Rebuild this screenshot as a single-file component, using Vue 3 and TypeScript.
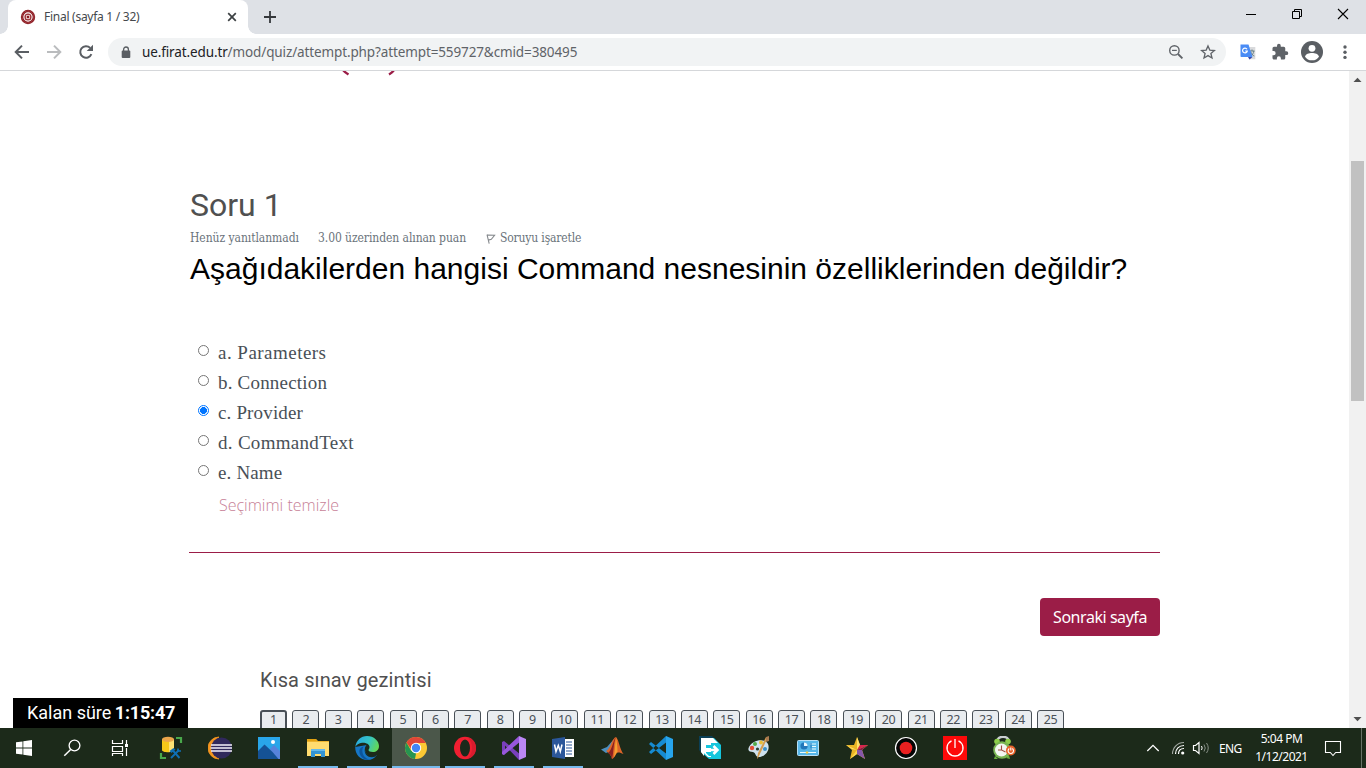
<script setup lang="ts">
import { ref } from 'vue'

interface Option { key: string; label: string }

const options: Option[] = [
  { key: 'a', label: 'Parameters' },
  { key: 'b', label: 'Connection' },
  { key: 'c', label: 'Provider' },
  { key: 'd', label: 'CommandText' },
  { key: 'e', label: 'Name' },
]
const selected = ref<string>('c')
const pages: number[] = Array.from({ length: 25 }, (_, i) => i + 1)
</script>

<template>
  <div class="screen">
    <header class="tabs">
      <div class="tab">
        <svg class="favicon" width="16" height="16" viewBox="0 0 16 16">
          <circle cx="8" cy="8" r="7.2" fill="#8e1b22" />
          <circle cx="8" cy="8" r="5.9" fill="none" stroke="#b86b6e" stroke-width=".6" stroke-dasharray="1 .6" />
          <circle cx="8" cy="8" r="4.1" fill="#8e1b22" stroke="#fff" stroke-width="1.1" />
          <path d="M6.300 6.300h3.400v3.400H6.300z" fill="none" stroke="#f3dcdc" stroke-width="1" />
        </svg>
        <span class="tab-title">Final (sayfa 1 / 32)</span>
        <svg class="tab-close" width="10" height="10" viewBox="0 0 10 10"><path d="M1.2 1.2l7.6 7.6M8.8 1.2L1.2 8.8" stroke="#3c4043" stroke-width="1.7" /></svg>
      </div>
      <svg class="plus" width="12" height="12" viewBox="0 0 12 12"><path d="M6 0v12M0 6h12" stroke="#35383b" stroke-width="1.8" /></svg>
      <div class="win-controls">
        <svg width="12" height="12" viewBox="0 0 12 12"><path d="M1 6.5h10" stroke="#000" /></svg>
        <svg width="12" height="12" viewBox="0 0 12 12"><path d="M1.5 3.5h7v7h-7zM3.5 3.5v-2h7v7h-2" fill="none" stroke="#000" /></svg>
        <svg width="12" height="12" viewBox="0 0 12 12"><path d="M1 1l10 10M11 1L1 11" stroke="#000" stroke-width="1.1" /></svg>
      </div>
    </header>

    <div class="toolbar">
      <div class="nav-icons">
        <svg width="16" height="16" viewBox="0 0 16 16"><path d="M15 8H2M8 1.6L1.7 8 8 14.4" fill="none" stroke="#5a5e63" stroke-width="2" /></svg>
        <svg width="16" height="16" viewBox="0 0 16 16"><path d="M1 8h13M8 1.6L14.3 8 8 14.4" fill="none" stroke="#babcbe" stroke-width="2" /></svg>
        <svg width="16" height="16" viewBox="0 0 16 16"><path d="M13.4 10.2A5.8 5.8 0 1 1 12.2 3.9" fill="none" stroke="#5a5e63" stroke-width="2" /><path d="M15 .8v6.3H8.7z" fill="#5a5e63" /></svg>
      </div>
      <div class="address">
        <svg class="lock" width="10" height="13" viewBox="0 0 10 13"><path d="M2.6 5V3.4a2.4 2.4 0 0 1 4.8 0V5" fill="none" stroke="#5a5e63" stroke-width="1.3" /><rect x=".7" y="4.6" width="8.6" height="7.4" rx="1" fill="#5a5e63" /></svg>
        <span class="url"><b>ue.firat.edu.tr</b>/mod/quiz/attempt.php?attempt=559727&amp;cmid=380495</span>
        <svg class="zoom" width="16" height="16" viewBox="0 0 16 16"><circle cx="6.4" cy="6.4" r="4.7" fill="none" stroke="#5f6368" stroke-width="1.4" /><path d="M10 10l4.4 4.4" stroke="#5f6368" stroke-width="1.9" /><path d="M4 6.4h4.8" stroke="#5f6368" stroke-width="1.2" /></svg>
        <svg class="star" width="16" height="16" viewBox="0 0 16 16"><path d="M8 1.9l1.8 4.2 4.6.4-3.5 3 1.1 4.5L8 11.600l-4 2.400 1.100-4.500-3.500-3 4.600-.4z" fill="none" stroke="#5f6368" stroke-width="1.3" /></svg>
      </div>
      <div class="extensions">
        <svg width="16" height="16" viewBox="0 0 16 16"><path d="M7 3h8.300v12.300H9z" fill="#d9dadc" /><path d="M10 7h4.500M12 5.500V7M10.500 12c2-1 3-3 3.300-5M10.800 8c.5 2 2 3.500 3.500 4" stroke="#657e84" stroke-width="1" fill="none" /><path d="M.5.500h8l4 12.500H1.300a.8.800 0 0 1-.8-.8z" fill="#4a8cf5" /><path d="M8 13h4.500L9.500 15.500z" fill="#3949ab" /><path d="M7 5.200A2.400 2.400 0 1 0 7.300 7H5.200" fill="none" stroke="#fff" stroke-width="1.200" /></svg>
        <svg width="18" height="18" viewBox="0 0 24 24"><path fill="#5f6368" d="M20.500 11H19V7a2 2 0 0 0-2-2h-4V3.500a2.500 2.500 0 0 0-5 0V5H4a2 2 0 0 0-2 2v3.800h1.500a2.700 2.700 0 0 1 0 5.400H2V20c0 1.100.9 2 2 2h3.800v-1.500a2.700 2.700 0 0 1 5.400 0V22H17a2 2 0 0 0 2-2v-4h1.500a2.500 2.500 0 0 0 0-5z" /></svg>
        <svg width="22" height="22" viewBox="0 0 22 22"><circle cx="11" cy="11" r="11" fill="#5a5e63" /><circle cx="11" cy="7.300" r="3.400" fill="#fff" /><path d="M4 15.700C4.600 13 8 12 11 12s6.400 1 7 3.700A8.200 8.200 0 0 1 11 19.300a8.200 8.200 0 0 1-7-3.600z" fill="#fff" /></svg>
        <svg width="4" height="16" viewBox="0 0 4 16"><g fill="#5a5e63"><circle cx="2" cy="3" r="1.700" /><circle cx="2" cy="8.200" r="1.700" /><circle cx="2" cy="13.400" r="1.700" /></g></svg>
      </div>
    </div>

    <main class="viewport">
      <section class="page">
        <svg class="logo-edge" width="60" height="5" viewBox="0 0 60 5"><path d="M1 -1q2 2.500 5.500 4.500M52 -1q-1.500 2.500-5 4.500" fill="none" stroke="#9b1d47" stroke-width="2.400" /></svg>
        <h3 class="question-no">Soru 1</h3>
        <div class="info">
          <span class="state">Henüz yanıtlanmadı</span>
          <span class="grade">3.00 üzerinden alınan puan</span>
          <span class="flag">
            <svg width="10" height="12" viewBox="0 0 10 12"><path d="M1 2.700l2.200 9M1 3l7.600.300-3.300 4-3 .8" fill="none" stroke="#85898d" stroke-width="1.100" /></svg>
            <span class="flag-text">Soruyu işaretle</span>
          </span>
        </div>
        <p class="question">Aşağıdakilerden hangisi Command nesnesinin özelliklerinden değildir?</p>
        <div class="answers">
          <label v-for="o in options" :key="o.key" class="answer">
            <input v-model="selected" type="radio" name="answer" :value="o.key" />
            <span :class="['answer-text', 'answer-' + o.key]">{{ o.key }}. {{ o.label }}</span>
          </label>
        </div>
        <a class="clear">Seçimimi temizle</a>
        <hr />
        <div class="actions"><button class="next"><span>Sonraki sayfa</span></button></div>
        <h5 class="nav-title">Kısa sınav gezintisi</h5>
        <nav class="pages">
          <span v-for="n in pages" :key="n" :class="['page-no', { current: n === 1 }]">{{ n }}</span>
        </nav>
      </section>
      <div class="timer"><span>Kalan süre <strong>1:15:47</strong></span></div>
      <aside class="scrollbar">
        <svg width="17" height="17" viewBox="0 0 17 17"><path d="M4.500 11l4-4.300 4 4.300z" fill="#505050" /></svg>
        <div class="thumb"></div>
        <svg class="down" width="17" height="17" viewBox="0 0 17 17"><path d="M4.500 6l4 4.300 4-4.300z" fill="#505050" /></svg>
      </aside>
    </main>

    <footer class="taskbar">
      <div class="cell"><svg viewBox="0 0 24 24"><path fill="#fff" d="M4 6.300l6.500-.9v6.100H4zM11.300 5.300L20 4v7.500h-8.700zM4 12.400h6.500v6.200L4 17.700zM11.300 12.400H20V20l-8.700-1.200z" /></svg></div>
      <div class="cell"><svg viewBox="0 0 24 24"><circle cx="14.500" cy="9.500" r="5.400" fill="none" stroke="#fff" stroke-width="1.300" /><path d="M10.700 13.500L4.300 19.700" stroke="#fff" stroke-width="1.500" /></svg></div>
      <div class="cell"><svg viewBox="0 0 24 24"><path d="M4.500 4v3.500h10V4M4.500 10.500h10v5h-10zM4.500 20v-2.500h10V20M18.500 4v4M18.500 12v8" fill="none" stroke="#fff" stroke-width="1.200" /><path d="M17 8h3v3h-3z" fill="#fff" /></svg></div>

      <div class="cell app first"><svg viewBox="0 0 24 24"><path d="M3 3v11c0 3 12 3 12 0V3z" fill="#f6c819" /><path d="M10 4v12c3 0 5-1 5-2V3z" fill="#ffe274" /><ellipse cx="9" cy="3.400" rx="6" ry="2.600" fill="#eba64b" /><path d="M17 2h5v5M2 17v5h5" fill="none" stroke="#49a84b" stroke-width="2.200" /><path d="M12 22l8-8M13.500 14l7 8" stroke="#0f6fb4" stroke-width="1.900" /><path d="M10.500 15l4-3 2 1.500-4 3.500z" fill="#0f6fb4" /><path d="M19 12.500v2.500h3" fill="none" stroke="#0f6fb4" stroke-width="1.600" /></svg></div>
      <div class="cell app"><svg viewBox="0 0 24 24"><path d="M11 1A11 11 0 0 0 11 23 13 13 0 0 1 11 1z" fill="#f4951f" stroke="#f4951f" stroke-width=".8" /><circle cx="13.500" cy="12" r="10.500" fill="#30285c" /><path d="M3 9h21M2.600 12h21.800M3 15h21" stroke="#f3f0fa" stroke-width="1.600" /></svg></div>
      <div class="cell app"><svg viewBox="0 0 24 24"><rect x="1" y="1" width="22" height="22" fill="#29a6e9" /><path d="M13 13l4-4 6 6v8h-8z" fill="#5783db" /><path d="M1 15l6.500-6.500 8 7.500 6 7H1z" fill="#155295" /><circle cx="16" cy="6" r="2" fill="#fff" /></svg></div>
      <div class="cell app running"><svg viewBox="0 0 24 24"><path d="M1 3h9l2 2h11v15H1z" fill="#edb42f" /><path d="M1 6h22v14H1z" fill="#ffdc70" /><path d="M1 3h9l1 2H1z" fill="#e2a111" /><path d="M5 13h14v8h-4v-3H9v3H5z" fill="#3294d4" /><path d="M5 13h14v2H5z" fill="#65b9eb" /></svg></div>
      <div class="cell app running"><svg viewBox="0 0 24 24">
        <defs><linearGradient id="edge-top" x1="0" y1=".2" x2="1" y2=".5"><stop offset="0" stop-color="#28a8e4" /><stop offset=".55" stop-color="#35c5c4" /><stop offset="1" stop-color="#63d957" /></linearGradient></defs>
        <path d="M.2 11C0 18 5 24 12.500 24c4 0 7-1.800 9.500-5-5 2.500-11 1.500-12-5-.4-4 2-5 2-5z" fill="#1677c6" />
        <path d="M.3 11C1 4.500 6 0 12 0c7 0 12 5 12 10 0 4-3 6-6 6-3 0-4.500-1-4.500-2s1-1 1-3c0-3-4-4.600-7.500-4.200C4 7.200 1.200 8.700.3 11z" fill="url(#edge-top)" />
        <path d="M8.500 10.500c-3 5 0 12 6.500 13.300C8 24.500 3.500 19 4.500 14c.5-2 2-3 4-3.500z" fill="#0c559c" />
        <path d="M10.500 11.500c-1.500 3 .5 7 4.500 8 3 .6 5.500-.2 7-1.300-.5 1-1 1.800-1.500 2.300-7 3-13-3-10-9z" fill="#182c25" />
      </svg></div>
      <div class="cell app chrome"><svg viewBox="0 0 24 24"><circle cx="12" cy="12" r="11" fill="#fcc934" /><path d="M2.500 6.500L7 14.500l5 3L11 23A11 11 0 0 1 2.500 6.500z" fill="#269451" /><path d="M12 7h9.800a11 11 0 0 0-19.300-.5L7 13z" fill="#df4638" /><circle cx="12" cy="12" r="5.200" fill="#fff" /><circle cx="12" cy="12" r="4.200" fill="#4285f4" /></svg></div>
      <div class="cell app running"><svg viewBox="0 0 24 24"><ellipse cx="12" cy="12" rx="11" ry="11.300" fill="#f01f31" /><path d="M15 1.500C21 3 23 8 23 12s-2 9-8 10.500c3-4 4-6 4-10.500s-1-7-4-10.500z" fill="#d81c2e" /><ellipse cx="12" cy="12" rx="5" ry="8.600" fill="#1c291b" /></svg></div>
      <div class="cell app running"><svg viewBox="0 0 24 24"><path d="M0 6l2-1 17 14-2 5L3 9.500v5L2 19l-2-1z" fill="#793fbc" /><path d="M17 0L0 16v2l2 1L19 5z" fill="#9857dc" /><path d="M17 0l7 3v18l-7 3z" fill="#bb87f5" /></svg></div>
      <div class="cell app running"><svg viewBox="0 0 24 24"><path d="M12 3h11v18H12z" fill="#fff" /><path d="M15 6h6M15 9h6M15 12h6M15 15h6M15 18h6" stroke="#2b579a" stroke-width="1.200" /><path d="M1 3l13-2v22L1 21z" fill="#2b579a" /><path d="M3.500 8.500l1.500 7L7.300 9.500l2 6 1.700-7" fill="none" stroke="#fff" stroke-width="1.500" /></svg></div>
      <div class="cell app"><svg viewBox="0 0 24 24"><path d="M1 13.500l6-2.500 7-8-3 12-5 2z" fill="#4c8fc0" /><path d="M6 15c4-1 6-13 10-14 3 3 4 13 7.500 17-3-1-4.500-2-6.500-1-2 2-2 4.500-5 6-1-4-3-6-6-8z" fill="#dd6529" /><path d="M16 1c-3 7-2 14-4 22-1-4-2-5-4-6C12 15 13 4 16 1z" fill="#8a2022" /><path d="M16 1c1 6 1.500 10 1.500 15-1.500 0-2 4-3.500 5z" fill="#f69f31" /></svg></div>
      <div class="cell app"><svg viewBox="0 0 24 24"><path d="M0 8l2-2 17 13-2 5zM0 16l2 2L19 5l-2-5z" fill="#168bd2" /><path d="M17 0l7 3v18l-7 3z" fill="#27a5ed" /></svg></div>
      <div class="cell app"><svg viewBox="0 0 24 24"><path d="M1 0h13l4 4H5v14l-4-4z" fill="#0b3f56" /><path d="M3 2h13l7 7v14H11l-8-7z" fill="#15c6dd" /><path d="M3 2h12l5 5H9c-2 0-3 1-3 3v10l-3-4z" fill="#fff" /><path d="M6 7h7v14H10l-4-4z" fill="#fff" /><path d="M8 9h5v3H8zM8 16h5v4h-2l-3-3z" fill="#15c6dd" /><path d="M6 14h12M15.500 10l4 4-4 4" fill="none" stroke="#fff" stroke-width="2.500" /></svg></div>
      <div class="cell app"><svg viewBox="0 0 24 24"><path d="M2 11C6 3 18 2 21 8c3 7-5 14-10 13-3-1-2-4-5-5-3 0-6-1-4-5z" fill="#cfe2ee" /><path d="M21 1L11 22l-1 1 1-6L19 1z" fill="#d49c4f" /><path d="M19 1l3-1v5l-3 1z" fill="#a87a4f" /><circle cx="5" cy="12" r="2.200" fill="#e54c36" /><circle cx="8" cy="8" r="2" fill="#52a948" /><circle cx="14" cy="6.500" r="2" fill="#e8bd36" /><circle cx="18" cy="13" r="2" fill="#3c8fc6" /><circle cx="10.500" cy="13" r="1.600" fill="#2a3c33" /></svg></div>
      <div class="cell app"><svg viewBox="0 0 24 24"><rect x="1.500" y="4.500" width="21" height="15" rx="1" fill="#57b7e9" stroke="#b5def5" stroke-width="1" /><circle cx="8" cy="10" r="3.600" fill="#2377ba" /><path d="M8 10V6.400A3.600 3.600 0 0 1 11.600 10z" fill="#eefaff" /><path d="M14 8h6M16 10.500h4M14 13h6M4 16.500h16" stroke="#e9fbff" stroke-width="1.200" /><path d="M15 7v7" stroke="#2377ba" stroke-width="1" /><circle cx="11" cy="16.500" r="1.200" fill="#f4cc44" /></svg></div>
      <div class="cell app"><svg viewBox="0 0 24 24"><path d="M12 1l3 8h8l-6 5 3 9-8-5-7 5 2-9-6-5h8z" fill="#eab524" /><path d="M12 1l3 8-3 5zM1 9l11 5-5-1z" fill="#ffe06c" /><path d="M15 9h8l-11 5z" fill="#d92450" /><path d="M12 14h5l3 9-8-5z" fill="#8657a9" /><path d="M17 14l6-5-11 5z" fill="#881b4c" /><path d="M12 14v4l-7 5z" fill="#ffd74a" /></svg></div>
      <div class="cell app"><svg viewBox="0 0 24 24"><circle cx="12" cy="12" r="10.500" fill="#050505" stroke="#fff" stroke-width="1.200" /><circle cx="12" cy="12" r="6.300" fill="#eb2020" /></svg></div>
      <div class="cell app"><svg viewBox="0 0 24 24"><path d="M0 0h24v24H0z" fill="#fd0909" /><path d="M8.500 4.800a8 8 0 1 0 7 0M12 3v9" fill="none" stroke="#fff" stroke-width="1.300" /></svg></div>
      <div class="cell app"><svg viewBox="0 0 24 24"><path d="M5 6c0-7 12-7 12 0" fill="none" stroke="#c9ced0" stroke-width="2.400" /><circle cx="5" cy="5.500" r="2.800" fill="#8ecf4b" /><circle cx="16" cy="5.500" r="2.800" fill="#8ecf4b" /><path d="M3 20l-1 3h4zM14 22l4 1-1-4z" fill="#6bb23d" /><circle cx="10" cy="14" r="8.800" fill="#79b552" /><circle cx="9.500" cy="14" r="6.500" fill="#f4f6f2" /><path d="M9.500 9.500v4.500l4 2M9 14H6" stroke="#a24c42" stroke-width="1.100" fill="none" /><circle cx="18.800" cy="14.500" r="4.900" fill="#e8632b" /><path d="M17.300 12.500a2.700 2.700 0 1 0 3 0M18.800 11.500v3" fill="none" stroke="#fff" stroke-width="1.100" /></svg></div>

      <div class="tray">
        <svg class="chev" width="14" height="8" viewBox="0 0 14 8"><path d="M1.300 7L7 1.400 12.700 7" fill="none" stroke="#fff" stroke-width="1.300" /></svg>
        <svg class="wifi" width="14" height="14" viewBox="0 0 14 14"><path d="M1.500 13C1.500 6.500 6.500 1.500 13 1.500" stroke="#a3a9a3" stroke-width="1.100" fill="none" /><path d="M4.500 13c0-5 3.500-8.500 8.500-8.500M7.500 13c0-3.500 2-5.500 5.500-5.500" fill="none" stroke="#fff" stroke-width="1.200" /><circle cx="11.700" cy="12" r="1.600" fill="#fff" /></svg>
        <svg class="sound" width="18" height="14" viewBox="0 0 18 14"><path d="M1.500 4.500h2L7 1.500v11l-3.500-3h-2z" fill="none" stroke="#fff" stroke-width="1.200" /><path d="M9.500 5q1.300 2 0 4" fill="none" stroke="#fff" /><path d="M12 3.500q2.500 3.500 0 7M14.500 2q3.500 5 0 10" fill="none" stroke="#879087" /></svg>
        <span class="lang">ENG</span>
        <div class="clock"><span class="time">5:04 PM</span><span class="date">1/12/2021</span></div>
        <svg class="notice" width="18" height="17" viewBox="0 0 18 17"><path d="M1.500 1.500h15v11h-4.800l-2.700 3-2.700-3H1.500z" fill="none" stroke="#fff" stroke-width="1.100" /></svg>
        <i class="peek"></i>
      </div>
    </footer>
  </div>
</template>

<style>
body { margin: 0; overflow: hidden; }
</style>

<style scoped>
* { box-sizing: border-box; }
.screen { width: 1366px; height: 768px; display: flex; flex-direction: column; overflow: hidden; background: #fff; font-family: "Noto Sans", "Open Sans", sans-serif; }
svg { display: block; flex: none; }
.screen span { white-space: nowrap; }

.tabs { height: 34px; flex: none; background: #dee1e6; display: flex; padding-left: 8px; }
.tab { position: relative; width: 240px; height: 34px; background: #fff; border-radius: 8px 8px 0 0; display: flex; align-items: center; padding-left: 12px; }
.tab::before, .tab::after { content: ""; position: absolute; bottom: 0; width: 8px; height: 8px; }
.tab::before { left: -8px; background: radial-gradient(circle at 0 0, #dee1e6 7.5px, #fff 8px); }
.tab::after { right: -8px; background: radial-gradient(circle at 100% 0, #dee1e6 7.5px, #fff 8px); }
.tab-title { margin-left: 8px; width: 183px; font-size: 12px; line-height: 16px; letter-spacing: -.27px; color: #45494d; }
.plus { margin: 11px 0 0 16px; }
.win-controls { margin-left: auto; padding: 8px 17px 0 0; display: flex; gap: 34px; }

.toolbar { height: 37px; flex: none; border-bottom: 1px solid #d5d7da; display: flex; align-items: center; padding-left: 14px; }
.nav-icons { display: flex; gap: 16px; width: 94px; }
.address { width: 1118px; height: 28px; border-radius: 14px; background: #f1f3f4; display: flex; align-items: center; padding-left: 13px; }
.url { margin-left: 11px; padding-bottom: 1px; font-size: 13.5px; letter-spacing: -.12px; color: #5f6368; }
.url b { font-weight: 400; color: #202124; }
.zoom { margin-left: auto; }
.star { margin: 0 10px 0 16px; }
.extensions { display: flex; align-items: center; margin-left: 14px; }
.extensions svg:nth-child(2) { margin-left: 15px; }
.extensions svg:nth-child(3) { margin-left: 12px; }
.extensions svg:nth-child(4) { margin-left: 20px; }

.viewport { position: relative; height: 657px; flex: none; display: flex; overflow: hidden; }
.page { width: 1349px; padding: 0 189px; display: flex; flex-direction: column; }
.page > * { flex-shrink: 0; }
.logo-edge { margin-left: 153px; }
h3, h5, p { margin: 0; font-weight: 400; }
.question-no { margin: 109px 0 0 1px; height: 40px; font: 400 32px/40px Roboto, sans-serif; color: #505050; }
.info { display: flex; height: 26px; line-height: 26px; padding-left: 1px; font-family: "DejaVu Serif Condensed", "DejaVu Serif", serif; font-size: 12px; color: #6a737b; }
.state { width: 128px; letter-spacing: -.06px; }
.grade { width: 168px; letter-spacing: -.08px; }
.flag { display: flex; align-items: center; letter-spacing: -.16px; }
.flag-text { margin-left: 4px; }
.question { height: 36px; padding-left: 1px; font: 30px/36px "Liberation Sans", Arial, sans-serif; white-space: nowrap; color: #000; }
.answers { margin-top: 51px; }
.answer { display: flex; height: 30px; line-height: 30px; padding-left: 8px; }
.answer input { appearance: none; width: 11px; height: 11px; margin: 7px 9px 0 1px; border: 1px solid #767676; border-radius: 50%; flex: none; background: #fff; }
.answer input:checked { border-color: #0075ff; background: radial-gradient(circle, #0075ff 3.200px, #fff 3.700px); }
.answer-text { font-family: "Liberation Serif", serif; font-size: 19px; letter-spacing: .3px; color: #495057; }
.answer-a { letter-spacing: .47px; }
.answer-b { letter-spacing: .2px; }
.answer-c { letter-spacing: .15px; }
.answer-e { letter-spacing: .15px; }
.clear { margin: 2px 0 0 30px; height: 30px; font-size: 16px; line-height: 30px; color: #c77f97; font-family: "Open Sans", sans-serif; font-weight: 300; }
hr { width: 971px; height: 1px; margin: 32px 0 0; border: 0; background: #9b1d47; }
.actions { display: flex; justify-content: flex-end; margin: 45px 0 0; width: 971px; }
.next { width: 120px; height: 38px; padding: 0; border: 0; border-radius: 4px; background: #9b1d47; color: #fff; font: 16px "Noto Sans", sans-serif; letter-spacing: -.45px; }
.nav-title { margin: 32px 0 0 71px; font: 400 20px/24px Roboto, sans-serif; letter-spacing: .1px; color: #505050; }
.pages { display: flex; gap: 5.375px; margin: 18px 0 0 71px; }
.page-no { width: 27px; height: 40px; flex: none; border: 1px solid #495057; border-radius: 3px; background: #e9ecef; font-size: 12.500px; line-height: 18px; text-align: center; letter-spacing: -.4px; color: #495057; }
.page-no.current { border-width: 2px; line-height: 16px; }
.timer { position: absolute; left: 13px; bottom: 0; width: 175px; height: 30px; background: #000; color: #fff; font: 18px/30px Roboto, sans-serif; padding-left: 14px; white-space: nowrap; }
.timer strong { font-weight: 700; letter-spacing: -.2px; margin-left: -1px; }

.scrollbar { width: 17px; background: #f1f1f1; display: flex; flex-direction: column; }
.thumb { width: 13px; height: 240px; margin: 73px 0 0 2px; background: #c1c1c1; }
.down { margin-top: auto; }

.taskbar { height: 40px; flex: none; background: #1c2a1a; display: flex; color: #fff; }
.cell { width: 48px; height: 40px; flex: none; display: flex; align-items: center; justify-content: center; }
.cell svg { width: 24px; height: 24px; }
.app { margin-right: 1px; }
.first { margin-left: 3px; }
.running { background: linear-gradient(#76b9ed, #76b9ed) center bottom / 40px 2px no-repeat; }
.chrome { background: linear-gradient(#76b9ed, #76b9ed) bottom / 100% 2px no-repeat, #4b574a; }
.tray { margin-left: auto; display: flex; align-items: center; height: 40px; font-size: 12px; }
.wifi { margin-left: 11px; }
.sound { margin-left: 7px; }
.lang { width: 36px; margin-left: 9px; letter-spacing: -.6px; }
.clock { width: 53px; text-align: center; line-height: 18px; letter-spacing: -.5px; display: flex; flex-direction: column; align-items: center; }
.notice { margin-left: 16px; }
.peek { width: 1px; height: 40px; margin: 0 4px 0 19px; background: #677266; }
</style>
